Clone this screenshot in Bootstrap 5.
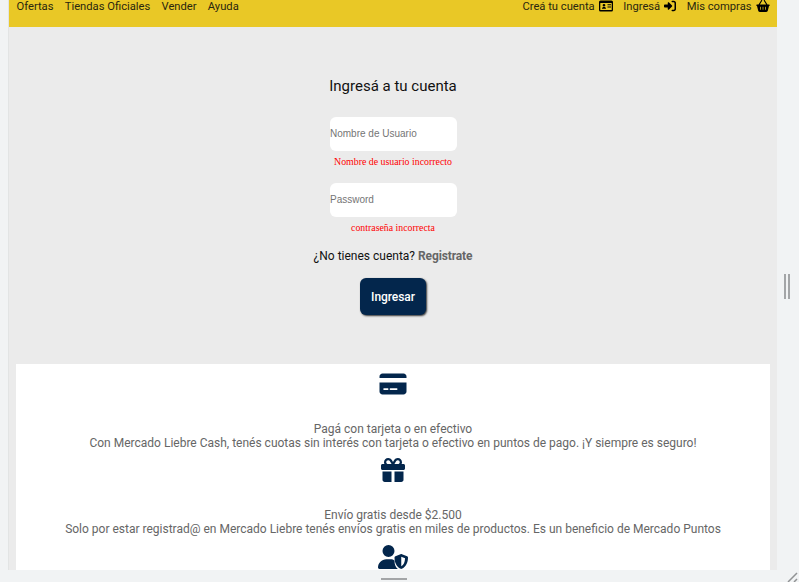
<!DOCTYPE html>
<html lang="es">
<head>
<meta charset="utf-8">
<meta name="viewport" content="width=device-width, initial-scale=1">
<title>Mercado Liebre</title>
<link rel="stylesheet" href="https://cdn.jsdelivr.net/npm/bootstrap@5.3.0/dist/css/bootstrap.min.css">
<style>
body{background:#f1f3f4;font-family:Roboto,sans-serif;font-size:12px;line-height:14px;color:#111;height:582px}
.viewport-frame{width:768px;height:570px;margin-left:9px;background:#ebebeb;box-shadow:-1px 0 0 #e2e4e4}
.topbar{height:27px;background:#e9c826;padding:0 7.5px;flex:none}
.topbar a{color:#29270f;text-decoration:none;white-space:nowrap;font-size:11.2px;line-height:13px}
.topbar svg{margin-left:4px;fill:#000;display:block}
.links-main{gap:11.3px}
.links-user{gap:10.5px}
.login{height:336.5px;padding-top:50px;flex:none}
.login h1{font-size:15px;line-height:18px;margin:0 0 21.5px;font-weight:400}
.field{width:127px;height:34px;border:0;border-radius:6px;padding:0 0 0 .5px;font:10px "Liberation Sans",Arial,sans-serif;background:#fff}
.field::placeholder{color:#757575;opacity:1}
.error-text{font:9.85px/12px "Liberation Serif","Times New Roman",serif;color:#f00;margin:5px 0 15px}
.signup{color:#111;margin-bottom:15px}
.signup a{color:#666;font-weight:700;text-decoration:none;letter-spacing:-.12px}
.btn-enter,.btn-enter:hover{width:66.5px;height:37px;padding:1px 0 0;border:0;border-radius:6px;background:#03264c;color:#fff;font-size:12px;font-weight:500;letter-spacing:-.05px;box-shadow:1px 1px 2px #333}
.benefits{width:754px;background:#fff;color:#666;overflow:hidden}
.benefits svg{fill:#03264c;display:block}
.benefit{height:86px;flex:none}
.benefit p{margin:0;white-space:nowrap}
.pic{height:59px;padding-top:8px}
.pic-user{padding-top:9px}
.handle-y{left:784px;top:274px;width:6px;height:25px;border:solid #a3a5a7;border-width:0 2px}
.handle-x{left:381px;top:578px;width:26px;height:2px;background:#a3a5a7}
.grip{right:0;bottom:0}
</style>
</head>
<body class="overflow-hidden position-relative">
<div class="viewport-frame d-flex flex-column overflow-hidden">
  <nav class="topbar d-flex justify-content-between align-items-start">
    <div class="links-main d-flex"><a href="#">Ofertas</a><a href="#">Tiendas Oficiales</a><a href="#">Vender</a><a href="#">Ayuda</a></div>
    <div class="links-user d-flex">
      <a href="#" class="d-flex">Creá tu cuenta <svg width="14" height="12" viewBox="0 0 14 12"><path fill-rule="evenodd" d="M1.500.500h11A1.500 1.500 0 0 1 14 2v8a1.500 1.500 0 0 1-1.500 1.500h-11A1.500 1.500 0 0 1 0 10V2A1.500 1.500 0 0 1 1.500.500zM1.300 3v7h11.400V3zM3 8.800c0-1.300.700-1.900 2-1.900s2 .600 2 1.900zM5 3.900a1.350 1.350 0 1 1 0 2.700 1.350 1.350 0 0 1 0-2.700zM8.500 4.300H12v1H8.500zM8.500 6.500H12v1H8.500z"/></svg></a>
      <a href="#" class="d-flex">Ingresá <svg width="12" height="12" viewBox="0 0 512 512"><path d="M352 96h64c17.700 0 32 14.300 32 32v256c0 17.700-14.300 32-32 32h-64c-17.700 0-32 14.300-32 32s14.300 32 32 32h64c53 0 96-43 96-96V128c0-53-43-96-96-96h-64c-17.700 0-32 14.300-32 32s14.300 32 32 32zm-9.400 182.600c12.500-12.500 12.500-32.800 0-45.300l-128-128C205.400 96 192 93 180 98c-12 5-20 17-20 30v64H32c-17.700 0-32 14.300-32 32v64c0 17.700 14.300 32 32 32h128v64c0 13 8 25 20 30s25 2 35-7z"/></svg></a>
      <a href="#" class="d-flex">Mis compras <svg width="14" height="12" viewBox="0 0 576 512"><path fill-rule="evenodd" d="M253 35c7-11 3-26-8-33s-26-3-33 8L97 192H32c-18 0-32 14-32 32s14 32 32 32l52 207c7 29 33 49 62 49h284c29 0 55-20 62-49l52-207c18 0 32-14 32-32s-14-32-32-32h-65L364 11c-7-11-22-15-33-8s-15 22-8 33l99 156H154zM192 304v96c0 9-7 16-16 16s-16-7-16-16v-96c0-9 7-16 16-16s16 7 16 16zm96-16c9 0 16 7 16 16v96c0 9-7 16-16 16s-16-7-16-16v-96c0-9 7-16 16-16zm128 16v96c0 9-7 16-16 16s-16-7-16-16v-96c0-9 7-16 16-16s16 7 16 16z"/></svg></a>
    </div>
  </nav>
  <main class="login d-flex flex-column align-items-center">
    <h1>Ingresá a tu cuenta</h1>
    <input class="field" type="text" placeholder="Nombre de Usuario" aria-label="Nombre de Usuario">
    <p class="error-text">Nombre de usuario incorrecto</p>
    <input class="field" type="password" placeholder="Password" aria-label="Password">
    <p class="error-text">contraseña incorrecta</p>
    <p class="signup">¿No tienes cuenta? <a href="#">Registrate</a></p>
    <button class="btn btn-enter" type="button">Ingresar</button>
  </main>
  <section class="benefits mx-auto flex-grow-1 d-flex flex-column align-items-center text-center">
    <div class="benefit d-flex flex-column align-items-center">
      <div class="pic"><svg width="28" height="24" viewBox="0 0 576 512"><path fill-rule="evenodd" d="M64 32C28.700 32 0 60.700 0 96v32h576V96c0-35.300-28.700-64-64-64zm512 192H0v192c0 35.300 28.700 64 64 64h448c35.300 0 64-28.700 64-64zM96 344h80c9 0 16 9 16 20s-7 20-16 20H96c-9 0-16-9-16-20s7-20 16-20zm120 20c0-11 7-20 16-20h136c9 0 16 9 16 20s-7 20-16 20H232c-9 0-16-9-16-20z"/></svg></div>
      <p>Pagá con tarjeta o en efectivo</p>
      <p>Con Mercado Liebre Cash, tenés cuotas sin interés con tarjeta o efectivo en puntos de pago. ¡Y siempre es seguro!</p>
    </div>
    <div class="benefit d-flex flex-column align-items-center">
      <div class="pic"><svg width="24" height="24" viewBox="0 0 512 512"><path fill-rule="evenodd" d="M190.500 68.800 225.300 128H152c-22 0-40-18-40-40s18-40 40-40h2.200c14.900 0 28.800 7.900 36.300 20.800zM64 88c0 14.400 3.500 28 9.600 40H32c-17.700 0-32 14.300-32 32v64c0 17.700 14.300 32 32 32h448c17.700 0 32-14.300 32-32v-64c0-17.700-14.300-32-32-32h-41.600c6.100-12 9.600-25.600 9.600-40 0-48.600-39.400-88-88-88h-2.200c-31.900 0-61.500 16.900-77.700 44.400L256 85.500l-24.100-41C215.700 16.900 186.100 0 154.200 0H152C103.400 0 64 39.400 64 88zm336 0c0 22-18 40-40 40h-73.300l34.800-59.200C329.100 55.900 342.900 48 357.800 48h2.200c22 0 40 18 40 40zM32 288v176c0 26.500 21.500 48 48 48h144V288zm256 224h144c26.500 0 48-21.500 48-48V288H288z"/></svg></div>
      <p>Envío gratis desde $2.500</p>
      <p>Solo por estar registrad@ en Mercado Liebre tenés envíos gratis en miles de productos. Es un beneficio de Mercado Puntos</p>
    </div>
    <div class="benefit d-flex flex-column align-items-center">
      <div class="pic pic-user"><svg width="30" height="24" viewBox="0 0 640 512"><path fill-rule="evenodd" d="M224 256a128 128 0 1 0 0-256 128 128 0 0 0 0 256zm-45.700 48C79.800 304 0 383.800 0 482.300 0 498.700 13.300 512 29.700 512h388.600c1.800 0 3.500-.2 5.300-.5-48-43-74-105-71-178-23-19-52-29.500-82-29.500zM481 195c9-4 21-4 30 0l110 44c12 5 19 16 19 28 0 97-36 198-132 241-8 4-17 4-25 0-95-43-131-144-131-241 0-12 7-23 19-28zM496 251v204c54-27 77-83 81-172z"/></svg></div>
    </div>
  </section>
</div>
<div class="handle-y position-absolute"></div>
<div class="handle-x position-absolute"></div>
<svg class="grip position-absolute" width="15" height="12" viewBox="0 0 15 12"><path d="M4 12 13 3M10 12 13 9" stroke="#919395" stroke-width="1.500" fill="none"/></svg>
<script src="https://cdn.jsdelivr.net/npm/bootstrap@5.3.0/dist/js/bootstrap.bundle.min.js"></script>
</body>
</html>
